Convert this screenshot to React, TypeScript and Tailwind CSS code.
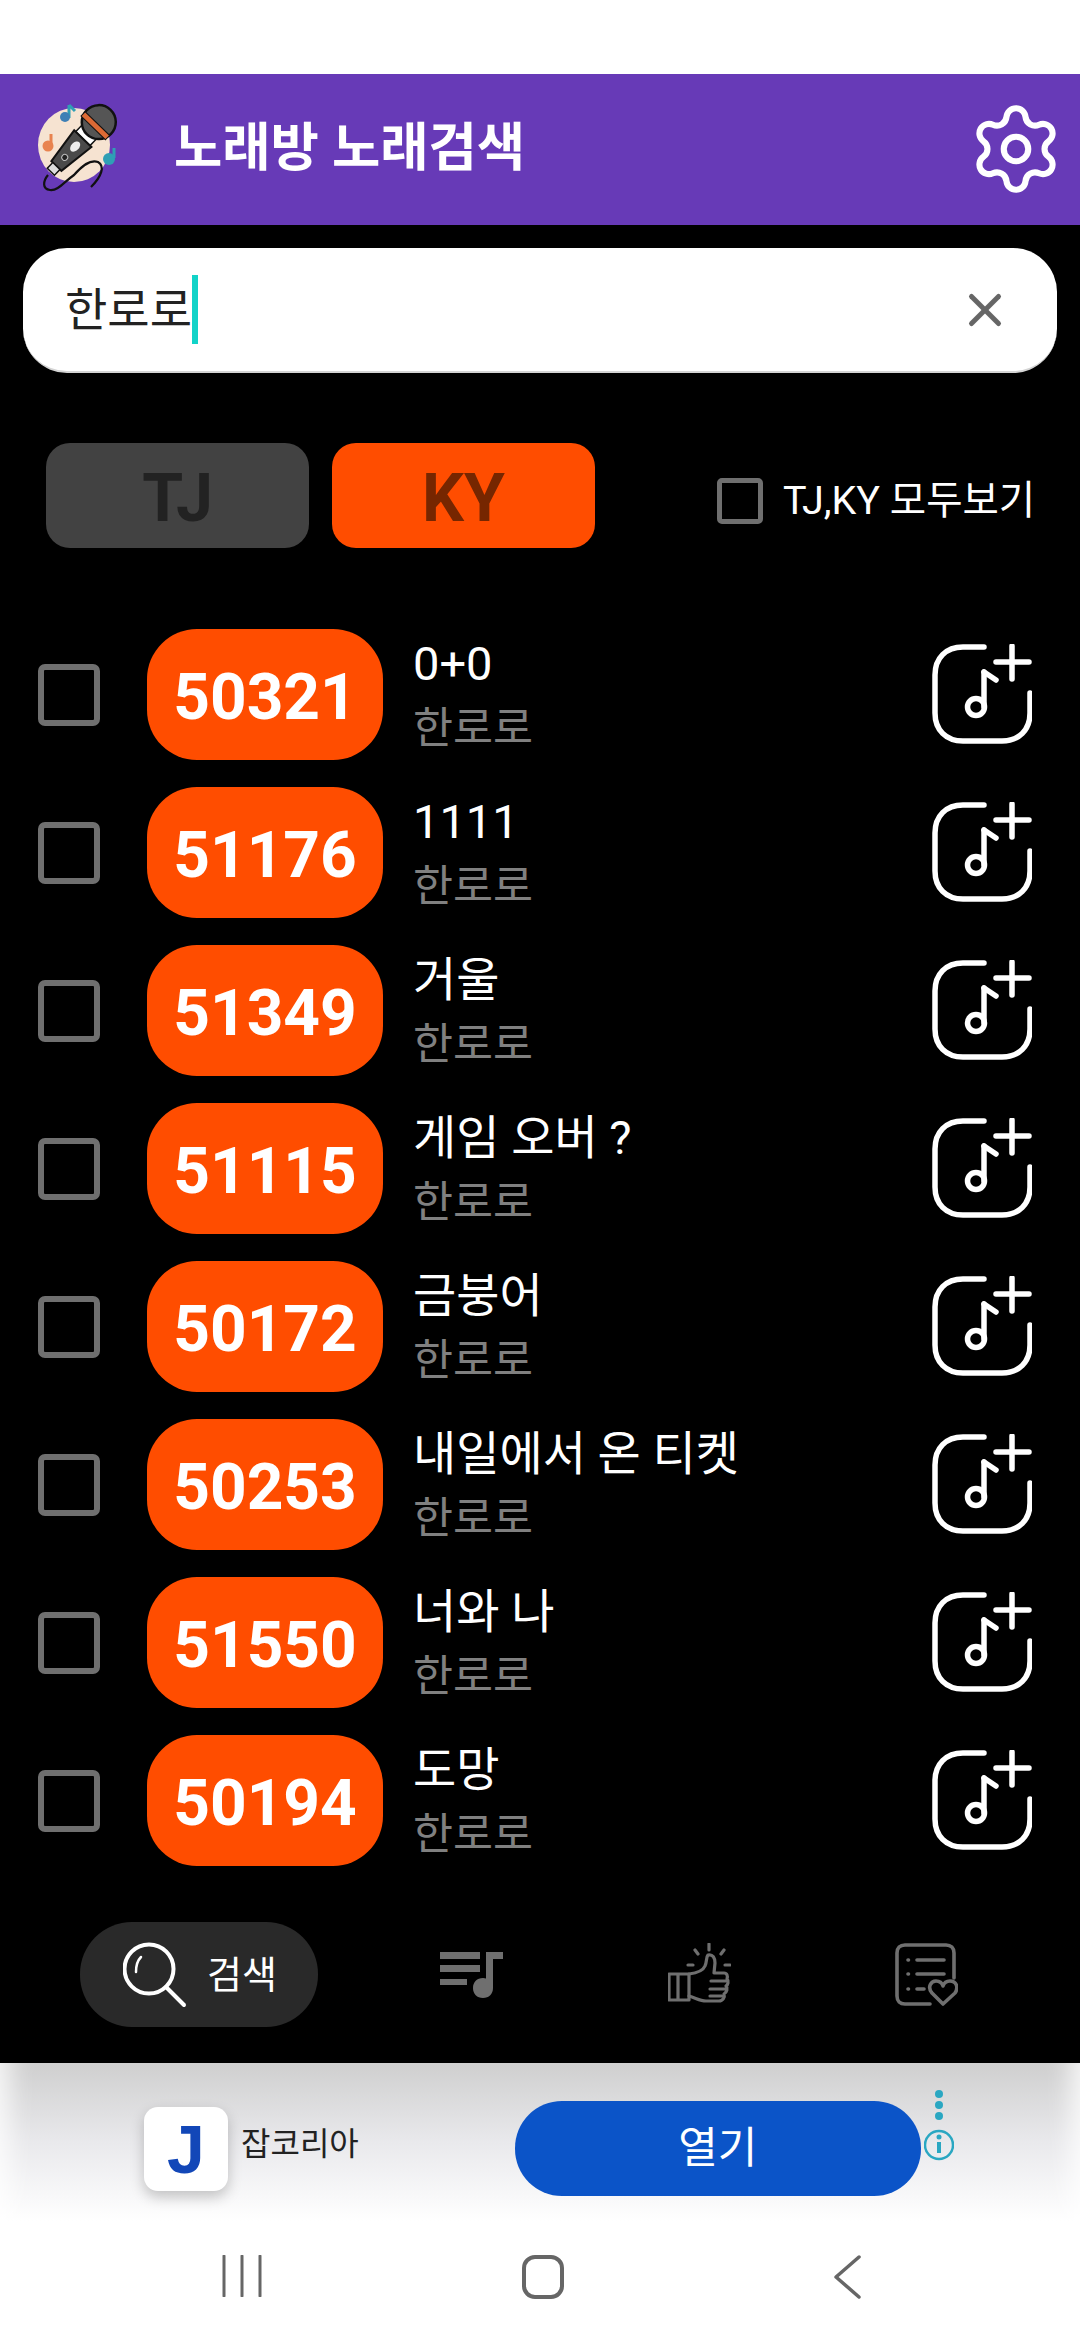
import { Settings, X } from "lucide-react";

const KR = "font-['Roboto','Noto_Sans_CJK_KR',sans-serif]";
const songs = [
  ["50321", "0+0"],
  ["51176", "1111"],
  ["51349", "거울"],
  ["51115", "게임 오버 ?"],
  ["50172", "금붕어"],
  ["50253", "내일에서 온 티켓"],
  ["51550", "너와 나"],
  ["50194", "도망"],
];

function Logo() {
  return (
    <svg width="110" height="110" viewBox="0 0 110 110" className="shrink-0 -mt-[9px]">
      <ellipse cx="54" cy="55" rx="36" ry="37" fill="#f6e3d1" />
      <path d="M49 15v13" stroke="#2f9fb5" strokeWidth="3" />
      <path d="M49 15l6 6" stroke="#2f9fb5" strokeWidth="3" />
      <circle cx="45" cy="27" r="5" fill="#3d7fb5" />
      <path d="M31 44v14" stroke="#e8834f" strokeWidth="3" />
      <circle cx="28" cy="56" r="5.5" fill="#e8834f" />
      <path d="M94 58v10" stroke="#2f9fb5" strokeWidth="3" />
      <circle cx="89" cy="69" r="6" fill="#2f9fb5" />
      <path d="M28 85c-5 6-6 14 2 15 8 1 14-8 24-15 8-9 16-16 24-13 7 4 4 14-7 25" fill="none" stroke="#111" strokeWidth="2.2" />
      <g transform="rotate(44 76 35)">
        <rect x="66" y="45" width="20" height="9" fill="#fff" stroke="#111" strokeWidth="1.5" />
        <path d="M64 54h24l-5 38h-14z" fill="#4a4a4a" stroke="#111" strokeWidth="2" />
        <rect x="71" y="92" width="10" height="8" fill="#ddd" stroke="#111" strokeWidth="1.5" />
        <ellipse cx="76" cy="65" rx="4" ry="6" fill="#eee" />
        <circle cx="76" cy="80" r="3" fill="#222" stroke="#bbb" />
        <circle cx="76" cy="31" r="17" fill="#555" stroke="#111" strokeWidth="2.5" />
        <rect x="59" y="33" width="34" height="6" fill="#dd6a35" stroke="#111" strokeWidth="1" />
      </g>
    </svg>
  );
}

function AddIcon() {
  return (
    <svg width="100" height="100" viewBox="0 0 100 100" fill="none" stroke="#fff" strokeWidth="5.5" strokeLinecap="round" strokeLinejoin="round" className="shrink-0 -mt-[2px]">
      <path d="M52 3H31C14 3 3 14 3 31v38c0 17 11 28 28 28h39c17 0 28-11 28-28V49" />
      <path d="M64 18h33M80 2v33" />
      <path d="M52 28l12 8" />
      <path d="M52 28v35" />
      <circle cx="44" cy="63" r="8.500" />
    </svg>
  );
}

function QueueIcon() {
  return (
    <svg width="63" height="46" viewBox="0 0 63 46" className="shrink-0" fill="#6f6f6f">
      <rect x="0" y="0" width="40" height="7" />
      <rect x="0" y="13" width="40" height="7" />
      <rect x="0" y="27" width="27" height="6" />
      <path d="M46 0h17v7H53v29c0 6-4 10-10 10s-10-4-10-10 4-10 10-10c1.200 0 2.200 .2 3 .5z" />
    </svg>
  );
}

function ThumbIcon() {
  return (
    <svg width="63" height="63" viewBox="0 0 63 63" className="shrink-0" fill="none" stroke="#6f6f6f" strokeWidth="3.200" strokeLinecap="round" strokeLinejoin="round">
      <path d="M1 31h20v26H1zM10 31v26" />
      <path d="M21 31c8-1 14-3 16-8 2-4 1-9 3-11 5-1 7 3 7 8l-1 10h10c3 0 4 3 3 6 2 2 1 6-1 7 2 2 1 6-2 8 1 3-1 7-5 7H38c-6 0-10-3-17-5" />
      <path d="M43 38h15M42 46h15M42 53h12" />
      <path d="M41 1v6M27 7l3 4M56 7l-3 4M20 22h5M62 22h-5" />
    </svg>
  );
}

function ListHeartIcon() {
  return (
    <svg width="63" height="63" viewBox="0 0 63 63" className="shrink-0" fill="none" stroke="#6f6f6f" strokeWidth="3.600" strokeLinecap="round" strokeLinejoin="round">
      <path d="M35 61H10c-5 0-8-3-8-8V10c0-5 3-8 8-8h41c5 0 8 3 8 8v25" />
      <path d="M13 17h.5M22 17h27M13 31h.5M22 31h27M13 46h.5M22 46h7" />
      <path d="M48 61L37 50c-5-6-1-12 4-12 3 0 6 2 7 5 1-3 4-5 7-5 6 0 9 6 5 12z" />
    </svg>
  );
}

function SearchIcon() {
  return (
    <svg width="64" height="66" viewBox="0 0 64 66" className="shrink-0" fill="none" stroke="#fff" strokeWidth="4" strokeLinecap="round">
      <circle cx="26" cy="27" r="24.500" />
      <path d="M43 45l18 18" />
      <path d="M13 30c0-7 2-12 5-15" strokeWidth="2.500" />
    </svg>
  );
}

export default function App() {
  return (
    <div className={`${KR} w-[1080px] h-[2340px] overflow-hidden flex flex-col bg-black`}>
      <div className="h-[74px] bg-white shrink-0" />
      <header className="h-[151px] shrink-0 bg-[#673ab7] flex items-center pl-[20px] pr-[20px]">
        <Logo />
        <div className="ml-[44px] -mt-[2px] text-[52.5px] leading-none font-bold text-white">노래방 노래검색</div>
        <Settings size={98} strokeWidth={1.5} color="#fff" className="ml-auto -mt-[2px] -mr-[5px]" />
      </header>

      <div className="mx-[23px] mt-[23px] h-[125px] shrink-0 bg-white rounded-[44px] border-b-2 border-[#d5d5d5] flex items-center pl-[42px] pr-[45px]">
        <span className="text-[46px] leading-none text-[#222]">한로로</span>
        <span className="w-[6px] h-[69px] bg-[#12d3c8]" />
        <X size={54} strokeWidth={2.2} color="#666" className="ml-auto" />
      </div>

      <div className="mt-[70px] h-[105px] shrink-0 flex items-center pl-[46px]">
        <div className="w-[263px] h-[105px] rounded-[24px] bg-[#424242] flex items-center justify-center text-[66px] leading-none font-bold text-[#222] pt-[6px]">TJ</div>
        <div className="ml-[23px] w-[263px] h-[105px] rounded-[24px] bg-[#ff4d00] flex items-center justify-center text-[66px] leading-none font-bold text-[#762600] pt-[6px]">KY</div>
        <div className="ml-[122px] mt-[10px] w-[46px] h-[46px] rounded-[5px] border-[5px] border-[#6f6f6f]" />
        <div className="ml-[20px] mt-[10px] text-[39.5px] leading-none text-white whitespace-nowrap">TJ,KY 모두보기</div>
      </div>

      <div className="mt-[81px] flex flex-col gap-[27px] shrink-0">
        {songs.map(([num, title]) => (
          <div key={num} className="h-[131px] flex items-center pl-[38px] pr-[48px]">
            <div className="w-[62px] h-[62px] rounded-[7px] border-[6px] border-[#6f6f6f] shrink-0" />
            <div className="ml-[47px] w-[236px] h-[131px] rounded-[50px] bg-[#ff4d00] flex items-center justify-center text-[64px] font-bold text-white shrink-0 pt-[6px]">{num}</div>
            <div className="ml-[30px] flex flex-col">
              <div className="text-[47px] leading-[68px] text-white whitespace-nowrap">{title}</div>
              <div className="text-[43.5px] leading-[62px] text-[#808080] whitespace-nowrap">한로로</div>
            </div>
            <div className="ml-auto">
              <AddIcon />
            </div>
          </div>
        ))}
      </div>

      <nav className="mt-[56px] h-[105px] shrink-0 flex items-center pl-[80px]">
        <div className="w-[238px] h-[105px] rounded-[52px] bg-[#292929] flex items-center pl-[43px]">
          <SearchIcon />
          <span className="ml-[20px] text-[38px] leading-none text-white">검색</span>
        </div>
        <div className="ml-[122px]"><QueueIcon /></div>
        <div className="ml-[165px]"><ThumbIcon /></div>
        <div className="ml-[164px]"><ListHeartIcon /></div>
      </nav>

      <div className="mt-[36px] h-[158px] shrink-0 bg-gradient-to-b from-[#cfcfcf] via-[#e9e9ec] to-white shadow-[inset_30px_0_24px_-20px_rgba(255,255,255,0.8),inset_-30px_0_24px_-20px_rgba(255,255,255,0.8)] flex items-start pl-[144px] pt-[38px]">
        <div className="mt-[6px] w-[84px] h-[84px] rounded-[14px] bg-white shadow-[0_6px_14px_rgba(0,0,0,0.22)] flex items-center justify-center text-[68px] leading-none font-black text-[#1247b8] font-['Liberation_Sans',sans-serif]">J</div>
        <div className="ml-[13px] mt-[27px] text-[32px] leading-none text-[#222] whitespace-nowrap">잡코리아</div>
        <div className="ml-[156px] w-[406px] h-[95px] rounded-[47px] bg-[#0b54c8] flex items-center justify-center text-[43px] leading-none text-white">열기</div>
        <div className="ml-[3px] -mt-[11px] w-[30px] flex flex-col items-center">
          <svg width="30" height="72" viewBox="0 0 30 72" fill="none">
            <circle cx="15" cy="4" r="4" fill="#2aa7c2" />
            <circle cx="15" cy="15" r="4" fill="#2aa7c2" />
            <circle cx="15" cy="26" r="4" fill="#2aa7c2" />
            <circle cx="15" cy="55" r="14" stroke="#2aa7c2" strokeWidth="2.500" />
            <circle cx="15" cy="47" r="2.500" fill="#2aa7c2" />
            <path d="M15 52v11" stroke="#2aa7c2" strokeWidth="4" />
          </svg>
        </div>
      </div>

      <div className="flex-1 bg-white flex items-start pt-[34px] pl-[221px]">
        <svg width="42" height="42" viewBox="0 0 42 42" fill="none" stroke="#666" strokeWidth="3" strokeLinecap="round">
          <path d="M3 1v40M21 1v40M39 1v40" />
        </svg>
        <svg width="44" height="44" viewBox="0 0 44 44" fill="none" stroke="#666" strokeWidth="4" className="ml-[259px]">
          <rect x="2" y="2" width="38" height="40" rx="11" />
        </svg>
        <svg width="30" height="44" viewBox="0 0 30 44" fill="none" stroke="#666" strokeWidth="3.500" strokeLinecap="round" strokeLinejoin="round" className="ml-[267px]">
          <path d="M26 2L3 22l23 20" />
        </svg>
      </div>
    </div>
  );
}
